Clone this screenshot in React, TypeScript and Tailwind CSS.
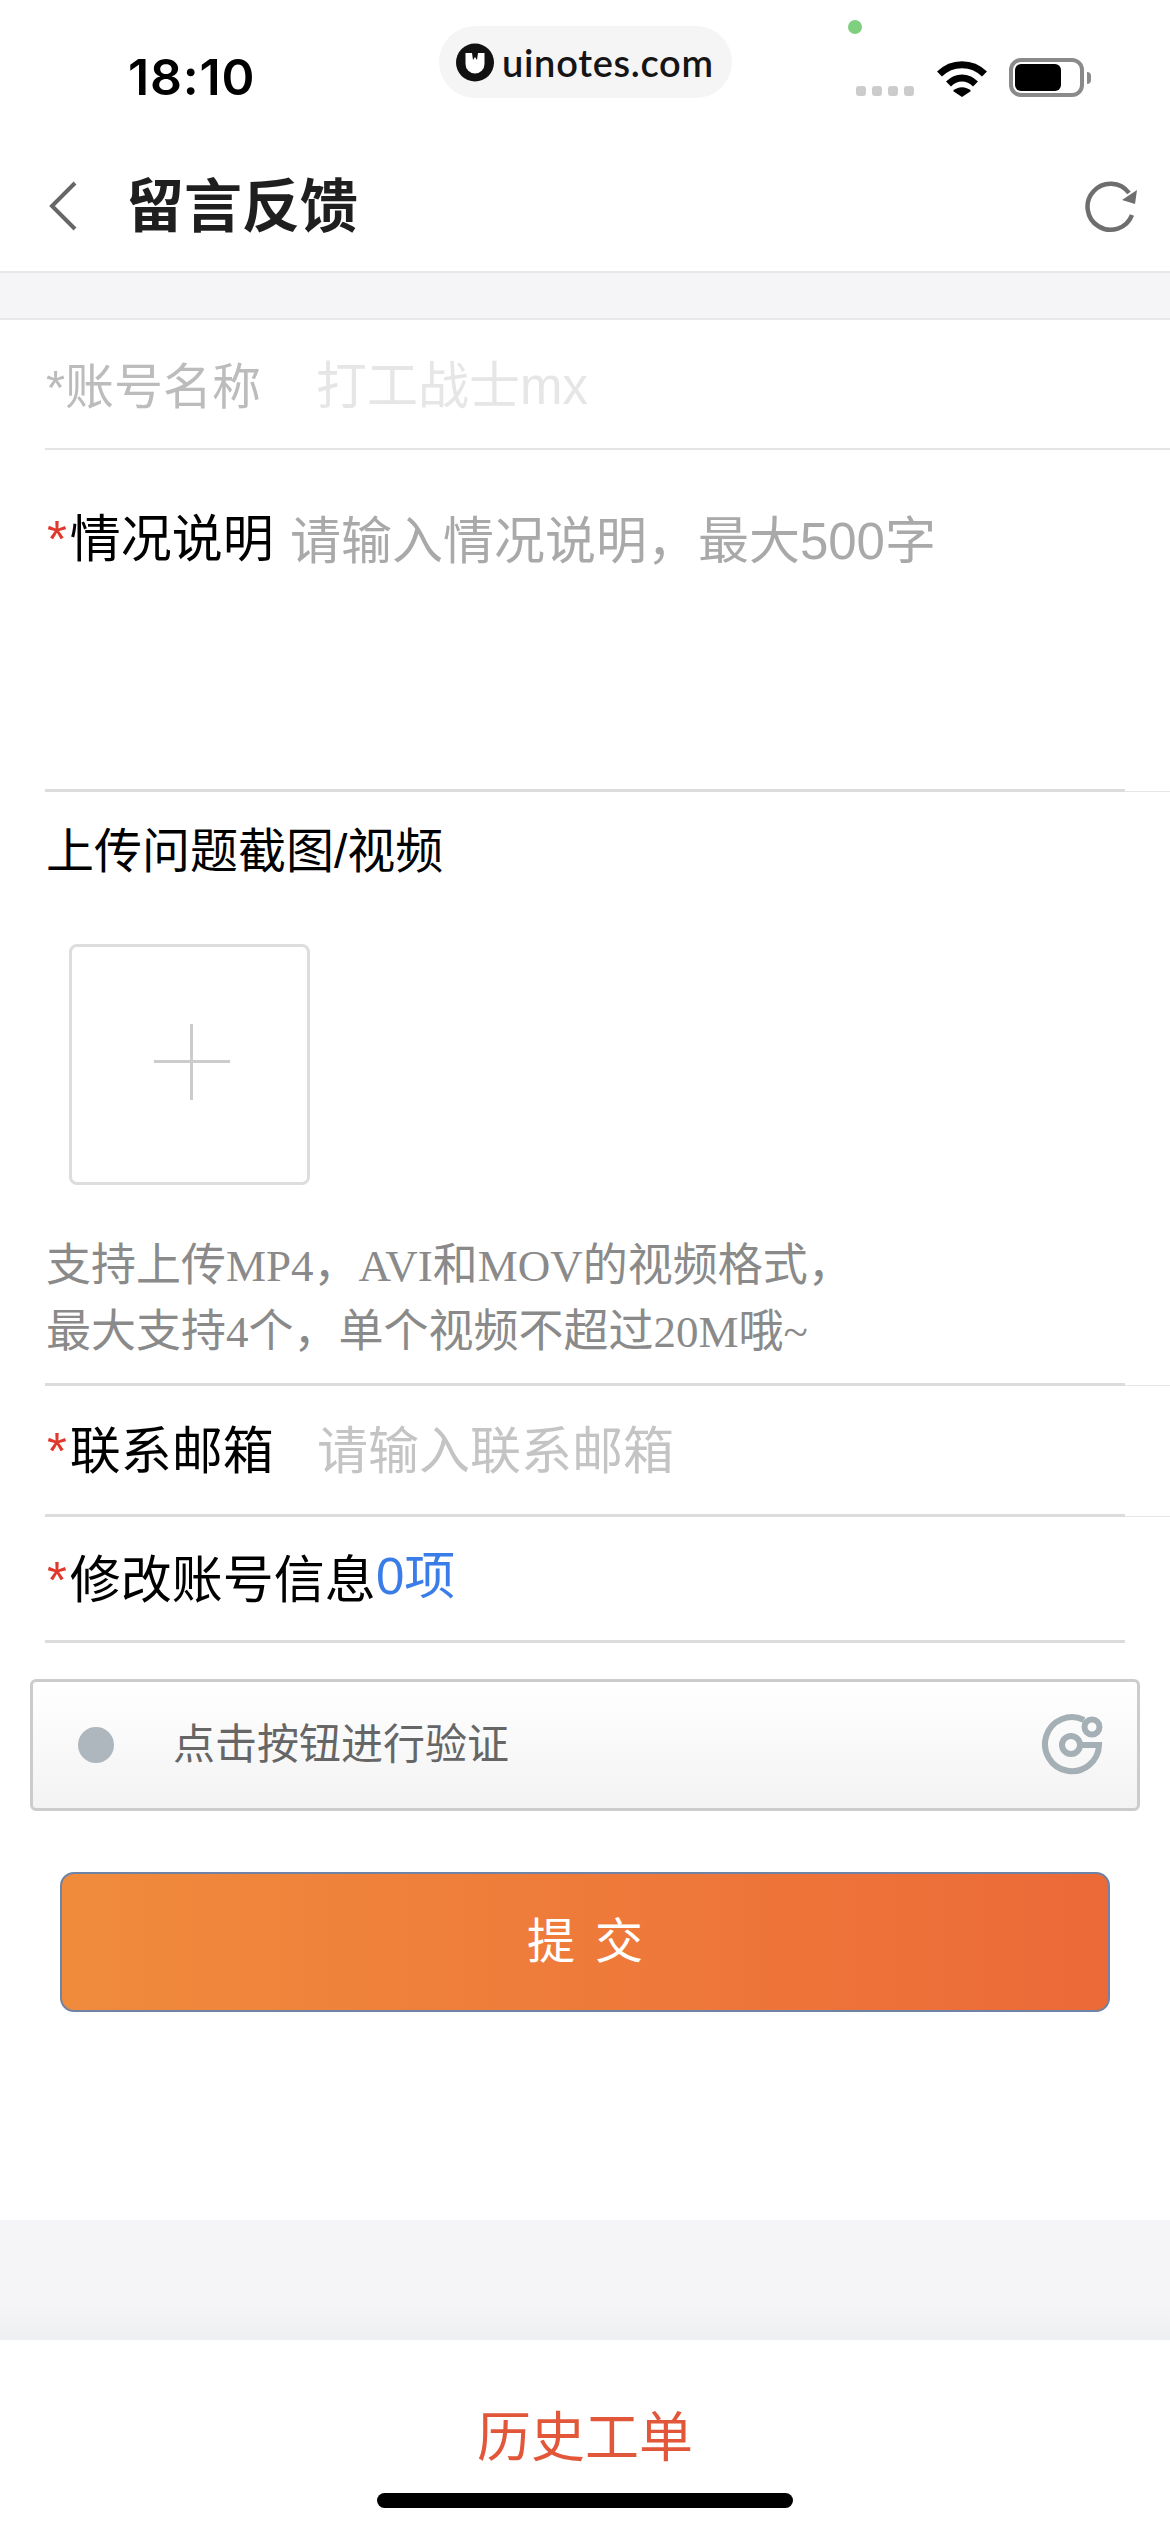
import React from 'react'

function Divider({ tail = true }: { tail?: boolean }) {
  return (
    <div className="ml-[45px] flex h-[3px] items-end">
      <div className="h-[3px] w-[1080px] bg-[#dcdcdc]" />
      {tail && <div className="h-px flex-1 bg-[#e6e6e6]" />}
    </div>
  )
}

function Star() {
  return <span className="mr-[3px] text-[#e0392b]">*</span>
}

function StatusBar() {
  return (
    <div className="relative flex h-[140px] items-start pl-[128px] pr-[79px] pt-[48px]">
      {/* watermark pill */}
      <div className="absolute left-[439px] top-[26px] flex h-[72px] w-[293px] items-center rounded-[36px] bg-[#f5f5f5] pl-[17px]">
        <svg width="38" height="39" viewBox="0 0 38 39">
          <circle cx="19" cy="19.5" r="19" fill="#111" />
          <path d="M9.500 10 H28.500 V21 A9.500 9.500 0 0 1 9.500 21 Z" fill="#fff" />
          <path d="M16 10 L17 17 L19 14 L21 17 L22 10 Z" fill="#111" />
        </svg>
        <span className="ml-[8px] font-['Lato',sans-serif] text-[38px] leading-none font-semibold tracking-[0.7px] text-[#151515]">uinotes.com</span>
      </div>
      <div className="absolute left-[848px] top-[20px] h-[14px] w-[14px] rounded-full bg-[#7ed07f]" />

      <span className="font-['Inter',sans-serif] text-[50px] leading-[58px] font-semibold tracking-[0.8px] text-black">18:10</span>

      <div className="ml-auto flex items-start">
        <div className="mt-[38px] flex gap-[6px]">
          <div className="h-[10px] w-[10px] rounded-[3px] bg-[#cccccc]" />
          <div className="h-[10px] w-[10px] rounded-[3px] bg-[#cccccc]" />
          <div className="h-[10px] w-[10px] rounded-[3px] bg-[#cccccc]" />
          <div className="h-[10px] w-[10px] rounded-[3px] bg-[#cccccc]" />
        </div>
        <svg className="ml-[22px] mt-[11px]" width="52" height="38" viewBox="0 0 52 38" fill="none">
          <path d="M3.500 15 C16 2.500 36 2.500 48.500 15" stroke="#000" strokeWidth="7" />
          <path d="M12.500 25 C20.500 17 31.500 17 39.500 25" stroke="#000" strokeWidth="7" />
          <path d="M17 32 C22 27 30 27 35 32 L26 38 Z" fill="#000" />
        </svg>
        <div className="ml-[21px] mt-[10px] flex items-center">
          <div className="flex h-[39px] w-[75px] items-center rounded-[12px] border-[4px] border-[#8a8a8a] px-[2px]">
            <div className="h-[27px] w-[46px] rounded-[6px] bg-black" />
          </div>
          <div className="ml-[3px] h-[12px] w-[4px] rounded-r-[4px] bg-[#8a8a8a]" />
        </div>
      </div>
    </div>
  )
}

function NavBar() {
  return (
    <div className="flex h-[133px] items-center justify-between border-b-[2px] border-[#e8e8e8] pl-[48px] pr-[31px]">
      <div className="flex items-center">
        <svg width="30" height="50" viewBox="0 0 30 50" fill="none">
          <path d="M27 2 L4 25 L27 48" stroke="#666" strokeWidth="4" />
        </svg>
        <span className="ml-[48px] mt-[2px] text-[58px] leading-none font-bold text-[#1f1f1f]">留言反馈</span>
      </div>
      <svg width="54" height="54" viewBox="0 0 54 54" fill="none">
        <path d="M47 36 A23 23 0 1 1 44 14" stroke="#6e6e6e" strokeWidth="4.500" />
        <path d="M52 11 L50 25 L37 21 Z" fill="#6e6e6e" />
      </svg>
    </div>
  )
}

function CaptchaIcon() {
  return (
    <svg width="62" height="62" viewBox="0 0 62 62" fill="none" stroke="#a4b0b6" strokeWidth="6">
      <path d="M43 6 A27 27 0 1 0 58 31 H38" />
      <circle cx="30" cy="31" r="9" />
      <circle cx="51" cy="13" r="7.500" />
    </svg>
  )
}

export default function App() {
  return (
    <div className="flex h-[2532px] w-[1170px] flex-col overflow-hidden bg-white font-[family-name:'Liberation_Sans','Noto_Sans_CJK_SC',sans-serif]">
      <StatusBar />
      <NavBar />

      <div className="h-[47px] border-b-[2px] border-[#e8e8e8] bg-[#f5f5f7]" />

      {/* account name, read only */}
      <div className="ml-[45px] flex h-[130px] items-center border-b-[2px] border-[#e4e4e4] pl-[1px] pt-[6px]">
        <span className="w-[270px] text-[49px] leading-[50px] text-[#bcbcbc]">*账号名称</span>
        <span className="text-[51px] leading-[50px] text-[#e6e6e6]">打工战士mx</span>
      </div>

      {/* description */}
      <div className="flex h-[339px] items-start pl-[47px] pt-[65px]">
        <span className="text-[51px] leading-[50px] text-black"><Star />情况说明</span>
        <span className="ml-[16px] mt-[2px] text-[51px] leading-[50px] text-[#a9a9a9]">请输入情况说明，最大500字</span>
      </div>
      <Divider />

      {/* upload */}
      <div className="pl-[46px] pt-[35px] pb-[18px]">
        <div className="text-[48px] leading-[50px] text-black">上传问题截图/视频</div>
        <div className="relative ml-[23px] mt-[67px] h-[241px] w-[241px] rounded-[8px] border-[3px] border-[#dddddd]">
          <div className="absolute left-[82px] top-[113px] h-[3px] w-[76px] bg-[#cccccc]" />
          <div className="absolute left-[118px] top-[77px] h-[76px] w-[3px] bg-[#cccccc]" />
        </div>
        <div className="mt-[48px] font-[family-name:'Liberation_Serif','Noto_Sans_CJK_SC',serif] text-[45px] leading-[66px] text-[#8a8a8a]">
          <div>支持上传MP4，AVI和MOV的视频格式，</div>
          <div>最大支持4个，单个视频不超过20M哦~</div>
        </div>
      </div>
      <Divider />

      {/* email */}
      <div className="flex h-[128px] items-center pl-[47px] pt-[4px]">
        <span className="w-[270px] text-[51px] leading-[50px] text-black"><Star />联系邮箱</span>
        <span className="text-[51px] leading-[50px] text-[#c4c4c4]">请输入联系邮箱</span>
      </div>
      <Divider />

      {/* account info */}
      <div className="flex h-[123px] items-center pl-[47px] pt-[4px]">
        <span className="text-[51px] leading-[50px] text-black"><Star />修改账号信息</span>
        <span className="mb-[8px] text-[51px] leading-[50px] text-[#3b7de8]">0项</span>
      </div>
      <Divider tail={false} />

      {/* captcha */}
      <div className="ml-[30px] mt-[36px] flex h-[132px] w-[1110px] items-center rounded-[6px] border-[3px] border-[#cccccc] bg-linear-to-b from-white to-[#f3f3f3] pl-[45px] pr-[34px]">
        <div className="h-[36px] w-[36px] rounded-full bg-[#adb7bd]" />
        <span className="ml-[59px] text-[42px] leading-none text-[#666666]">点击按钮进行验证</span>
        <div className="ml-auto">
          <CaptchaIcon />
        </div>
      </div>

      <button className="ml-[60px] mt-[61px] flex h-[140px] w-[1050px] items-center justify-center rounded-[14px] border-[2px] border-[#6f83a6] bg-linear-to-r from-[#f08b3c] to-[#ec6938] text-[48px] leading-none tracking-[20px] text-white">
        <span className="mr-[-20px]">提交</span>
      </button>

      <div className="mt-[208px] h-[120px] bg-linear-to-b from-[#f5f5f7] from-70% to-[#eeeff1]" />

      <div className="relative flex flex-1 justify-center pt-[71px]">
        <span className="text-[54px] leading-[54px] text-[#e2573a]">历史工单</span>
        <div className="absolute bottom-[24px] left-[377px] h-[15px] w-[416px] rounded-full bg-black" />
      </div>
    </div>
  )
}
